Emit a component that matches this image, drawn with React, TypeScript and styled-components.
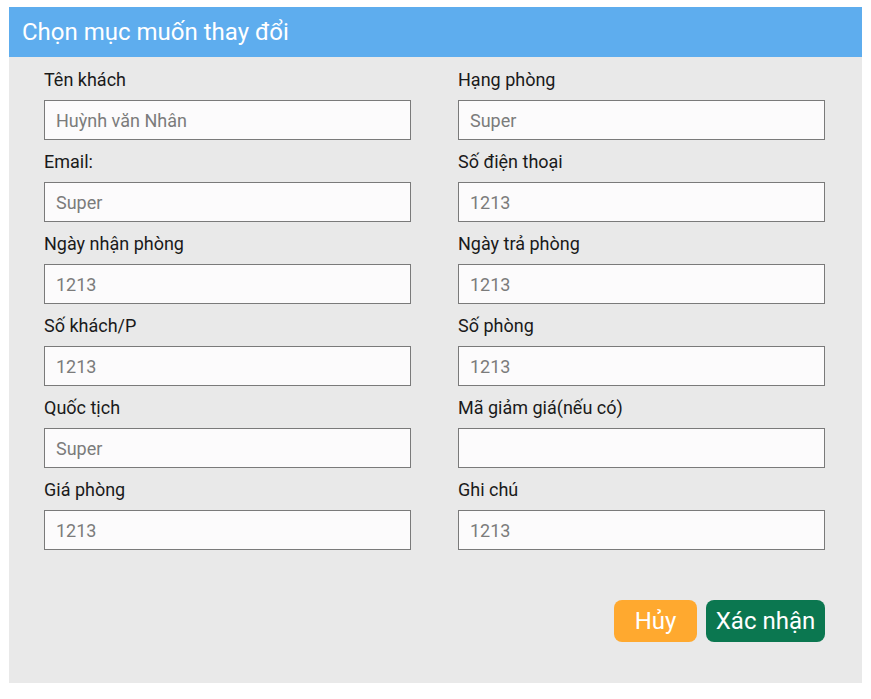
import React from "react";
import styled, { createGlobalStyle } from "styled-components";

const Global = createGlobalStyle`
  html, body { margin: 0; padding: 0; background: #ffffff; }
  body { font-family: Roboto, "Noto Sans", Arial, sans-serif; }
  * { box-sizing: border-box; }
`;

const Page = styled.div`
  padding: 7px 9px 16px 9px;
`;

const Panel = styled.div`
  background: #e9e9e9;
  width: 853px;
`;

const Header = styled.div`
  height: 50px;
  background: #5eadee;
  color: #ffffff;
  font-size: 24px;
  display: flex;
  align-items: center;
  padding-left: 13px;
  padding-bottom: 1px;
`;

const Body = styled.div`
  padding: 11px 37px 41px 35px;
`;

const Grid = styled.div`
  display: grid;
  grid-template-columns: 367px 367px;
  column-gap: 47px;
  row-gap: 10px;
`;

const Field = styled.div`
  display: flex;
  flex-direction: column;
`;

const Label = styled.label`
  font-size: 18px;
  line-height: 24px;
  color: #1a1a1a;
  margin-bottom: 8px;
`;

const Input = styled.input`
  height: 40px;
  width: 100%;
  border: 1px solid #7a7a7a;
  background: #fcfbfc;
  padding: 0 11px;
  font-family: Roboto, "Noto Sans", Arial, sans-serif;
  font-size: 18px;
  color: #222;
  outline: none;
  &::placeholder { color: #7b7b7b; }
`;

const Actions = styled.div`
  display: flex;
  justify-content: flex-end;
  gap: 9px;
  margin-top: 50px;
`;

const Button = styled.button<{ $variant: "cancel" | "confirm" }>`
  height: 42px;
  border: none;
  border-radius: 8px;
  color: #ffffff;
  font-family: Roboto, "Noto Sans", Arial, sans-serif;
  font-size: 24px;
  padding: 0 8px;
  background: ${(p) => (p.$variant === "cancel" ? "#ffa92f" : "#0b7750")};
  min-width: ${(p) => (p.$variant === "cancel" ? "83px" : "119px")};
`;

const fields: { label: string; placeholder: string }[] = [
  { label: "Tên khách", placeholder: "Huỳnh văn Nhân" },
  { label: "Hạng phòng", placeholder: "Super" },
  { label: "Email:", placeholder: "Super" },
  { label: "Số điện thoại", placeholder: "1213" },
  { label: "Ngày nhận phòng", placeholder: "1213" },
  { label: "Ngày trả phòng", placeholder: "1213" },
  { label: "Số khách/P", placeholder: "1213" },
  { label: "Số phòng", placeholder: "1213" },
  { label: "Quốc tịch", placeholder: "Super" },
  { label: "Mã giảm giá(nếu có)", placeholder: "" },
  { label: "Giá phòng", placeholder: "1213" },
  { label: "Ghi chú", placeholder: "1213" },
];

export default function App() {
  return (
    <Page>
      <Global />
      <Panel>
        <Header>Chọn mục muốn thay đổi</Header>
        <Body>
          <Grid>
            {fields.map((f) => (
              <Field key={f.label}>
                <Label>{f.label}</Label>
                <Input placeholder={f.placeholder} />
              </Field>
            ))}
          </Grid>
          <Actions>
            <Button $variant="cancel">Hủy</Button>
            <Button $variant="confirm">Xác nhận</Button>
          </Actions>
        </Body>
      </Panel>
    </Page>
  );
}
